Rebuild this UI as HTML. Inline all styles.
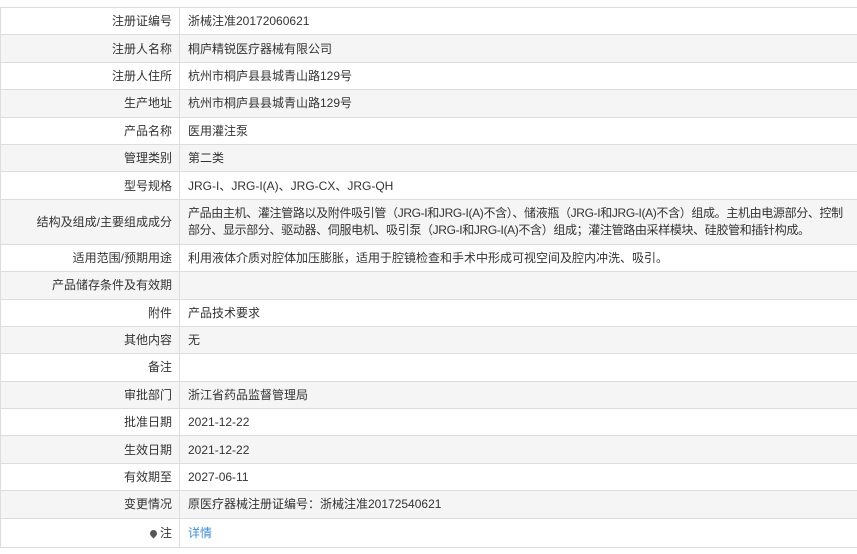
<!DOCTYPE html>
<html><head><meta charset="utf-8"><style>
body{margin:0;background:#fff;font-family:"Liberation Sans","Noto Sans CJK SC",sans-serif;font-size:12px;color:#333;}
table{position:absolute;top:7px;left:0;width:858px;border-collapse:collapse;}
td{border:1px solid #ddd;height:26.4px;padding:0;line-height:16px;box-sizing:border-box;}
tr{height:27.4px;}
td.l{width:179px;text-align:right;padding-right:7px;}
td.r{padding-left:8px;padding-right:4px;}
tr:nth-child(even) td{background:#f5f5f5;}
tr.two{height:45px;}
tr.two td.r{word-break:break-all;letter-spacing:-0.35px;line-height:17px;}
tr.last{height:29px;}
a{color:#3a8ee6;text-decoration:none;}
.pin{display:inline-block;width:7px;height:7px;border-radius:50% 50% 50% 0;transform:rotate(-45deg);background:#555;margin-right:3px;vertical-align:0px;}
</style></head><body>
<table>
<tr><td class="l">注册证编号</td><td class="r">浙械注准20172060621</td></tr>
<tr><td class="l">注册人名称</td><td class="r">桐庐精锐医疗器械有限公司</td></tr>
<tr><td class="l">注册人住所</td><td class="r">杭州市桐庐县县城青山路129号</td></tr>
<tr><td class="l">生产地址</td><td class="r">杭州市桐庐县县城青山路129号</td></tr>
<tr><td class="l">产品名称</td><td class="r">医用灌注泵</td></tr>
<tr><td class="l">管理类别</td><td class="r">第二类</td></tr>
<tr><td class="l">型号规格</td><td class="r">JRG-I、JRG-I(A)、JRG-CX、JRG-QH</td></tr>
<tr class="two"><td class="l">结构及组成/主要组成成分</td><td class="r">产品由主机、灌注管路以及附件吸引管（JRG-I和JRG-I(A)不含）、储液瓶（JRG-I和JRG-I(A)不含）组成。主机由电源部分、控制部分、显示部分、驱动器、伺服电机、吸引泵（JRG-I和JRG-I(A)不含）组成；灌注管路由采样模块、硅胶管和插针构成。</td></tr>
<tr><td class="l">适用范围/预期用途</td><td class="r">利用液体介质对腔体加压膨胀，适用于腔镜检查和手术中形成可视空间及腔内冲洗、吸引。</td></tr>
<tr><td class="l">产品储存条件及有效期</td><td class="r"></td></tr>
<tr><td class="l">附件</td><td class="r">产品技术要求</td></tr>
<tr><td class="l">其他内容</td><td class="r">无</td></tr>
<tr><td class="l">备注</td><td class="r"></td></tr>
<tr><td class="l">审批部门</td><td class="r">浙江省药品监督管理局</td></tr>
<tr><td class="l">批准日期</td><td class="r">2021-12-22</td></tr>
<tr><td class="l">生效日期</td><td class="r">2021-12-22</td></tr>
<tr><td class="l">有效期至</td><td class="r">2027-06-11</td></tr>
<tr><td class="l">变更情况</td><td class="r">原医疗器械注册证编号：浙械注准20172540621</td></tr>
<tr class="last"><td class="l"><span class="pin"></span>注</td><td class="r"><a>详情</a></td></tr>
</table>
</body></html>
